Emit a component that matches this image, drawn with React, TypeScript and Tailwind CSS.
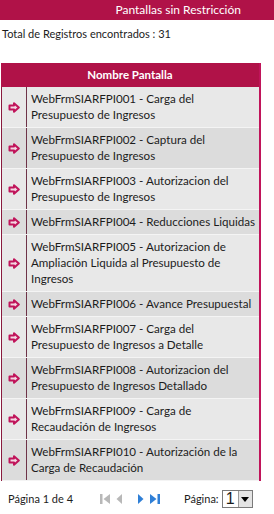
import React from 'react';

const rows: string[][] = [
  ['WebFrmSIARFPI001 - Carga del', 'Presupuesto de Ingresos'],
  ['WebFrmSIARFPI002 - Captura del', 'Presupuesto de Ingresos'],
  ['WebFrmSIARFPI003 - Autorizacion del', 'Presupuesto de Ingresos'],
  ['WebFrmSIARFPI004 - Reducciones Liquidas'],
  ['WebFrmSIARFPI005 - Autorizacion de', 'Ampliación Liquida al Presupuesto de', 'Ingresos'],
  ['WebFrmSIARFPI006 - Avance Presupuestal'],
  ['WebFrmSIARFPI007 - Carga del', 'Presupuesto de Ingresos a Detalle'],
  ['WebFrmSIARFPI008 - Autorizacion del', 'Presupuesto de Ingresos Detallado'],
  ['WebFrmSIARFPI009 - Carga de', 'Recaudación de Ingresos'],
  ['WebFrmSIARFPI010 - Autorización de la', 'Carga de Recaudación'],
];

const Arrow = () => (
  <svg width="12" height="11" viewBox="0 0 12 11">
    <path d="M1.5 3.5 H6 V1.2 L10.8 5.5 L6 9.8 V7.5 H1.5 Z" fill="#f4d6e2" stroke="#c0145a" strokeWidth="2" strokeLinejoin="round" />
  </svg>
);

const App: React.FC = () => {
  return (
    <div className="w-[274px] h-[514px] bg-white text-[#1c1c1c]" style={{ fontFamily: 'Lato, "Open Sans", sans-serif' }}>
      <div className="h-[20px] bg-[#b01248] flex items-center justify-end pr-[33px]">
        <span className="text-white text-[12px]">Pantallas sin Restricción</span>
      </div>
      <div className="pl-[2px] pt-[7px] text-[11px] leading-[14px]">Total de Registros encontrados : 31</div>

      <div className="ml-[1px] mt-[22px] w-[260px] border-r-2 border-[#c0145a]">
        <div className="h-[24px] bg-[#b01248] flex items-center justify-center text-white font-bold text-[11.5px]">
          Nombre Pantalla
        </div>
        <div className="border-l border-[#8a1a3e]">
          {rows.map((lines, i) => (
            <div
              key={i}
              className={`flex border-b border-[#f4f4f4] ${i % 2 === 0 ? 'bg-[#e8e8e8]' : 'bg-[#dcdcdc]'}`}
            >
              <div className="w-[25px] shrink-0 flex items-center justify-center border-r border-[#6e3348]">
                <Arrow />
              </div>
              <div className="flex-1 pl-[4px] py-[4px] text-[11.6px] leading-[16px]">
                {lines.map((l, j) => (
                  <div key={j} className="whitespace-nowrap">{l}</div>
                ))}
              </div>
            </div>
          ))}
        </div>
      </div>

      <div className="flex items-center h-[36px] text-[11px]">
        <span className="pl-[8px] w-[100px]">Página 1 de 4</span>
        <div className="flex items-center gap-[5px]">
          <svg width="11" height="12" viewBox="0 0 11 12">
            <rect x="0" y="1" width="2.5" height="10" fill="#b8b8b8" />
            <path d="M10 1 L3.5 6 L10 11 Z" fill="#b8b8b8" />
          </svg>
          <svg width="7" height="12" viewBox="0 0 7 12">
            <path d="M6 1 L0.5 6 L6 11 Z" fill="#b8b8b8" />
          </svg>
          <span className="w-[4px]" />
          <svg width="7" height="12" viewBox="0 0 7 12">
            <path d="M1 1 L6.5 6 L1 11 Z" fill="#2f7fd6" />
          </svg>
          <svg width="11" height="12" viewBox="0 0 11 12">
            <path d="M1 1 L7.5 6 L1 11 Z" fill="#2f7fd6" />
            <rect x="8.5" y="1" width="2.5" height="10" fill="#2f7fd6" />
          </svg>
        </div>
        <span className="ml-[24px]">Página:</span>
        <div className="ml-[3px] flex items-center h-[18px] border border-[#7a7a7a] bg-white">
          <span className="w-[15px] text-center text-[16px] leading-[16px]" style={{ fontFamily: '"Liberation Sans", sans-serif' }}>1</span>
          <div className="w-[14px] h-[16px] bg-[#e4e4e4] border-l border-[#9a9a9a] flex items-center justify-center">
            <svg width="8" height="5" viewBox="0 0 8 5">
              <path d="M0 0 H8 L4 5 Z" fill="#000" />
            </svg>
          </div>
        </div>
      </div>
    </div>
  );
};

export default App;
